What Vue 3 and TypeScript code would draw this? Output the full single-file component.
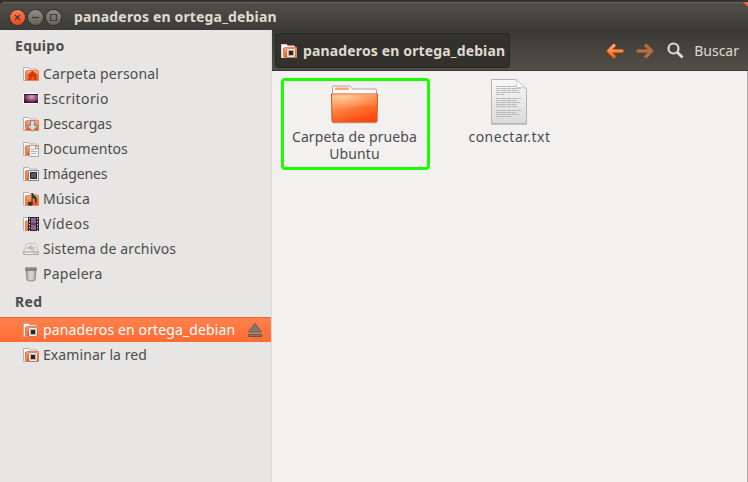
<script setup lang="ts">
interface Place {
  label: string
  icon: string
  spacing: number
  selected?: boolean
}

interface Section {
  title: string
  places: Place[]
}

const sections: Section[] = [
  {
    title: 'Equipo',
    places: [
      { label: 'Carpeta personal', icon: 'home', spacing: 0.19 },
      { label: 'Escritorio', icon: 'desktop', spacing: 0.4 },
      { label: 'Descargas', icon: 'download', spacing: 0.1 },
      { label: 'Documentos', icon: 'document', spacing: 0.1 },
      { label: 'Imágenes', icon: 'picture', spacing: -0.15 },
      { label: 'Música', icon: 'music', spacing: 0.1 },
      { label: 'Vídeos', icon: 'video', spacing: 0.5 },
      { label: 'Sistema de archivos', icon: 'drive', spacing: 0.15 },
      { label: 'Papelera', icon: 'trash', spacing: 0.25 },
    ],
  },
  {
    title: 'Red',
    places: [
      { label: 'panaderos en ortega_debian', icon: 'remote', spacing: 0.12, selected: true },
      { label: 'Examinar la red', icon: 'remote', spacing: 0.08 },
    ],
  },
]

const textLines: [number, number][] = [
  [8, 25], [10, 25], [12, 23], [14, 24], [16, 8], [20, 25], [22, 21], [24, 24], [26, 20], [28, 22], [32, 25], [34, 20], [36, 23], [38, 16],
]

const isFolder = (icon: string) => !['desktop', 'drive', 'trash'].includes(icon)
</script>

<template>
  <div class="window">
    <svg class="defs" width="0" height="0">
      <defs>
        <linearGradient id="orange" x1="0" y1="0" x2="0" y2="1">
          <stop offset="0" stop-color="#ffb184" /><stop offset="1" stop-color="#f04a12" />
        </linearGradient>
        <linearGradient id="folder" x1="0.1" y1="0" x2="0.6" y2="1">
          <stop offset="0" stop-color="#ffb57c" /><stop offset="0.5" stop-color="#ff7d40" /><stop offset="1" stop-color="#fc4a0b" />
        </linearGradient>
        <radialGradient id="gloss" cx="0.25" cy="0.1" r="0.8">
          <stop offset="0" stop-color="#ffdda8" stop-opacity="0.8" /><stop offset="1" stop-color="#ffa270" stop-opacity="0.25" />
        </radialGradient>
        <linearGradient id="paper" x1="0" y1="0" x2="0" y2="1">
          <stop offset="0" stop-color="#f8f8f8" /><stop offset="1" stop-color="#dadada" />
        </linearGradient>
        <radialGradient id="wallpaper" cx="0.55" cy="0.35" r="0.6">
          <stop offset="0" stop-color="#e3a9c5" /><stop offset="1" stop-color="#4e092b" />
        </radialGradient>
        <linearGradient id="arrow" x1="0" y1="0" x2="0" y2="1">
          <stop offset="0" stop-color="#ffb07c" /><stop offset="1" stop-color="#fb6420" />
        </linearGradient>
        <linearGradient id="steel" x1="0" y1="0" x2="1" y2="0">
          <stop offset="0" stop-color="#999" /><stop offset="0.5" stop-color="#e2e2e2" /><stop offset="1" stop-color="#999" />
        </linearGradient>
      </defs>
    </svg>

    <header class="titlebar">
      <div class="controls">
        <button class="control close" aria-label="Cerrar">
          <svg width="15" height="15" viewBox="0 0 15 15"><path d="M5 5l5 5M10 5l-5 5" /></svg>
        </button>
        <button class="control" aria-label="Minimizar">
          <svg width="15" height="15" viewBox="0 0 15 15"><path d="M4 7.5h7" /></svg>
        </button>
        <button class="control" aria-label="Maximizar">
          <svg width="15" height="15" viewBox="0 0 15 15"><path d="M4.5 4.5h6v6h-6z" /></svg>
        </button>
      </div>
      <h1 class="title">panaderos en ortega_debian</h1>
      <i class="corner left"></i><i class="corner right"></i>
    </header>

    <div class="body">
      <aside class="sidebar">
        <section v-for="section in sections" :key="section.title">
          <h2 class="heading"><span>{{ section.title }}</span></h2>
          <ul class="places">
            <li v-for="place in section.places" :key="place.label" class="place" :class="{ selected: place.selected }">
              <svg class="icon" width="16" height="16" viewBox="0 0 16 16">
                <template v-if="isFolder(place.icon)">
                  <path d="M.5 14.5V1.500h5l1.500 1.500h6.500v11.500z" fill="#faf9f8" stroke="#b5b1ad" />
                  <path d="M2 5h2v9H2z" fill="#f27a43" />
                  <path d="M3.500 4.500h12v10h-12z" fill="url(#orange)" stroke="#ef8255" />
                </template>
                <template v-if="place.icon === 'home'">
                  <path d="M9.500 4.800L15 9.500h-1.500V14h-2.700v-3H8.500v3H5.800V9.500H4z" fill="#d9360a" />
                </template>
                <template v-else-if="place.icon === 'desktop'">
                  <path d="M.5 2.500h15v10H.5z" fill="url(#wallpaper)" stroke="#fff" />
                  <path d="M1 3h14v1H1z" fill="#302227" />
                </template>
                <template v-else-if="place.icon === 'download'">
                  <path d="M7.500 4.500h4v5h3.500L9.500 15.300 4 9.500h3.500z" fill="#d9d9d9" stroke="#858585" />
                </template>
                <template v-else-if="place.icon === 'document'">
                  <path d="M6.500 4.500h6l3 3v8h-9z" fill="#f1f1f1" stroke="#aaa" />
                  <path d="M8 8.500h4M8 10.500h6M8 12.500h5" stroke="#b5b5b5" />
                  <path d="M12.500 4.500v3h3" fill="#fff" stroke="#999" />
                </template>
                <template v-else-if="place.icon === 'picture'">
                  <path d="M5.500 4.500h10v10h-10z" fill="#eee" stroke="#888" />
                  <path d="M7.500 6.500h6v6h-6z" fill="#674d70" stroke="#29232c" />
                </template>
                <template v-else-if="place.icon === 'music'">
                  <path d="M9 12.500V2c.5 2 4.500 3 4.500 6.500 0 1.500-.5 3-1 3.500.5-3-.5-5-3-5.500" fill="#333" stroke="#333" />
                  <ellipse cx="7.300" cy="12.800" rx="2.500" ry="2" fill="#333" />
                </template>
                <template v-else-if="place.icon === 'video'">
                  <path d="M5 1h11v14H5z" fill="#29242b" />
                  <path d="M8 2h5v5.500H8zM8 8.500h5V14H8z" fill="#965d95" />
                  <path d="M6.500 2v13M14.500 2v13" stroke="#ccc" stroke-dasharray="1.500 1.500" />
                </template>
                <template v-else-if="place.icon === 'drive'">
                  <path d="M3.500 2.500h9l3 8.500H.5z" fill="#e7e7e7" stroke="#c4c4c4" />
                  <path d="M.5 11h15v2.500H.5z" fill="#d4d4d4" stroke="#aaa" />
                  <path d="M3.500 7H12M5.500 7l2-2h2M7 7l2 2h2" fill="none" stroke="#aaa" />
                  <path d="M8 5.500L5.500 7 8 8.500z" fill="#aaa" />
                  <path d="M2 12.500h8" stroke="#f5f5f5" />
                </template>
                <template v-else-if="place.icon === 'trash'">
                  <path d="M3 3.500l1 10.700c2 1 6 1 8 0l1-10.700z" fill="url(#steel)" stroke="#8b8b8b" />
                  <path d="M5.500 6l.5 7M8 6v7M10.500 6l-.5 7" stroke="#c5c5c5" />
                  <rect x="2.500" y="1.500" width="11" height="3" rx="1.200" fill="#777" stroke="#888" />
                  <path d="M4 2h8" stroke="#bbb" />
                </template>
                <template v-else-if="place.icon === 'remote'">
                  <path d="M6 6h8v8H6z" fill="#b9b6b0" stroke="#6f665f" stroke-width=".6" />
                  <path d="M6.500 6.500h7v7h-7z" fill="none" stroke="#eee9e4" />
                  <path d="M8 8h4v4H8z" fill="#282828" />
                </template>
              </svg>
              <span class="label" :style="{ letterSpacing: place.spacing + 'px' }">{{ place.label }}</span>
              <svg v-if="place.selected" class="eject" width="16" height="16" viewBox="0 0 16 16">
                <path d="M8 1.500L14.500 10h-13zM1.500 12.500h13v2h-13z" fill="#807a74" stroke="#605d59" />
              </svg>
            </li>
          </ul>
        </section>
      </aside>

      <main class="main">
        <nav class="toolbar">
          <button class="crumb">
            <svg width="16" height="16" viewBox="0 0 16 16">
              <path d="M.5 14.500V1.500h5L7 3h6.500v11.500z" fill="#faf9f8" stroke="#d9d5d1" />
              <path d="M2 5h2v9H2z" fill="#f27a43" />
              <path d="M3.500 4.500h12v10h-12z" fill="url(#orange)" stroke="#ef8255" />
              <path d="M6 6h8v8H6z" fill="#b9b6b0" stroke="#6f665f" stroke-width=".6" />
              <path d="M6.500 6.500h7v7h-7z" fill="none" stroke="#eee9e4" />
              <path d="M8 8h4v4H8z" fill="#282828" />
            </svg>
            <span>panaderos en ortega_debian</span>
          </button>
          <div class="tools">
            <svg width="18" height="16" viewBox="0 0 18 16">
              <path d="M8 2.500L2.500 8 8 13.500M3 8h13" fill="none" stroke="#d94b10" stroke-width="3.800" stroke-linecap="round" stroke-linejoin="round" />
              <path d="M8 2.500L2.500 8 8 13.500M3 8h13" fill="none" stroke="url(#arrow)" stroke-width="2.600" stroke-linecap="round" stroke-linejoin="round" />
            </svg>
            <svg class="forward" width="18" height="16" viewBox="0 0 18 16">
              <path d="M10 2.500l5.500 5.500-5.500 5.500M15 8H2" fill="none" stroke="#a4542f" stroke-width="3.800" stroke-linecap="round" stroke-linejoin="round" />
              <path d="M10 2.500l5.500 5.500-5.500 5.500M15 8H2" fill="none" stroke="#b0714a" stroke-width="2.500" stroke-linecap="round" stroke-linejoin="round" />
            </svg>
            <svg class="search" width="17" height="17" viewBox="0 0 17 17">
              <circle cx="6.500" cy="6.500" r="5" fill="none" stroke="#dfdbd2" stroke-width="2.200" />
              <path d="M10.500 10.500l5 5" stroke="#dfdbd2" stroke-width="2.800" />
            </svg>
            <span class="search-label">Buscar</span>
          </div>
        </nav>

        <div class="files">
          <figure class="file highlighted">
            <svg width="50" height="42" viewBox="0 0 50 42">
              <rect x="2" y="38" width="45" height="2" rx="1" fill="#cbc4c0" />
              <path d="M2.500 30V3.500q0-1 1-1H19q1.500 0 2.500 1.500l1 1.500H45q1.500 0 1.500 1V30z" fill="#f9f9f9" stroke="#aaa6a3" />
              <rect x="5" y="4" width="14" height="2.500" rx="1" fill="#ffa26f" />
              <path d="M1.500 10.500h46l-.5 27q0 1-1 1H3q-1 0-1-1z" fill="url(#folder)" stroke="#d94e17" />
              <path d="M2 11h45l-.2 10Q27 22 2.300 27z" fill="url(#gloss)" />
              <path d="M2.500 11.500h44" stroke="#ffb184" />
            </svg>
            <figcaption>Carpeta de prueba Ubuntu</figcaption>
          </figure>
          <figure class="file document">
            <svg width="38" height="48" viewBox="0 0 38 48">
              <path d="M1 46.500h36" stroke="#c7c7c7" />
              <path d="M1.500 1.500H26L36.500 11v34.500h-35z" fill="url(#paper)" stroke="#b4b4b4" />
              <path v-for="[y, w] in textLines" :key="y" :d="`M6 ${y + 0.5}h${w}`" stroke="#b9b9b9" stroke-dasharray="4 .5 6 .5" />
              <path d="M25.500 1.200q2 3 1 8.300 6-1 10 1.500z" fill="#fff" stroke="#c5c5c5" stroke-width=".8" />
            </svg>
            <figcaption>conectar.txt</figcaption>
          </figure>
        </div>
      </main>
    </div>
  </div>
</template>

<style>
body {
  margin: 0;
}
</style>

<style scoped>
.window {
  display: flex;
  flex-direction: column;
  width: 748px;
  height: 482px;
  overflow: hidden;
  color: #4c4c4c;
  background: #f2f1f0;
  font: 14px/17px "Noto Sans", sans-serif;
}
.defs { position: absolute; }
button { font: inherit; margin: 0; }
h1, h2, ul, figure { margin: 0; padding: 0; }

.titlebar {
  position: relative;
  display: flex;
  flex: none;
  align-items: center;
  box-sizing: border-box;
  height: 30px;
  padding: 2px 10px 0;
  border-top: 2px solid #35342f;
  background: linear-gradient(#65635b 0 1px, #504f49 1px, #3c3b37);
}
.controls { display: flex; gap: 3px; }
.control {
  display: flex;
  width: 15px;
  height: 15px;
  padding: 0;
  border: 0;
  border-radius: 50%;
  background: linear-gradient(#8e8c83, #65635d);
  box-shadow: 0 0 0 1px #35342f;
}
.control path { fill: none; stroke: #3c3b37; stroke-width: 1.2; }
.close { background: linear-gradient(#ff7d51, #ed481a); }
.title {
  margin: -2px 0 0 13px;
  color: #dfdbd2;
  font-size: 14px;
  font-weight: 700;
  letter-spacing: 0.16px;
  line-height: 17px;
  white-space: nowrap;
}
.corner { position: absolute; top: 0; width: 3px; height: 2px; }
.left { left: 0; background: #650d2a; clip-path: polygon(0 0, 100% 0, 0 100%); }
.right { right: 0; width: 5px; height: 5px; background: #ef633b; clip-path: polygon(0 0, 100% 0, 100% 100%); }

.body { display: flex; flex: 1; min-height: 0; }
.sidebar {
  box-sizing: border-box;
  width: 272px;
  background: #e7e6e4;
  border-right: 1px solid #dcdad7;
}
.heading {
  display: flex;
  align-items: center;
  height: 31px;
  padding-left: 15px;
  font-size: 14px;
  letter-spacing: 0.35px;
}
.places { list-style: none; }
.place { display: flex; align-items: center; height: 25px; padding: 0 8px 0 23px; white-space: nowrap; }
.icon { flex: none; margin-right: 4px; }
.eject { margin-left: auto; }
.selected {
  color: #fff;
  background: linear-gradient(#f0662f 0 1px, #ff814d 1px, #ff6c34);
}

.main {
  display: flex;
  flex: 1;
  flex-direction: column;
  box-sizing: border-box;
  border-right: 1px solid #aaa9a7;
}
.toolbar {
  display: flex;
  align-items: center;
  justify-content: space-between;
  box-sizing: border-box;
  height: 41px;
  margin-right: -1px;
  padding: 1px 9px 0 3px;
  border-bottom: 1px solid #3a3833;
  background: linear-gradient(#3a3934, #514f47);
}
.crumb {
  display: flex;
  align-items: center;
  gap: 6px;
  box-sizing: border-box;
  width: 235px;
  height: 35px;
  padding: 1px 3px 1px 5px;
  border: 1px solid #282823;
  border-radius: 3px;
  background: #32312c;
  color: #dfdbd2;
  font-weight: 700;
  letter-spacing: 0.14px;
  white-space: nowrap;
}
.crumb svg { flex: none; }
.tools { display: flex; align-items: center; color: #dfdbd2; }
.forward { margin-left: 12px; }
.search { margin-left: 13px; }
.search-label { margin-left: 10px; }

.files { display: flex; gap: 5px; padding: 7px 9px; }
.file {
  display: flex;
  flex-direction: column;
  align-items: center;
  box-sizing: border-box;
  width: 149px;
  height: 92px;
  padding-right: 2px;
  border: 3px solid transparent;
  border-radius: 4px;
  text-align: center;
}
.file svg { flex: none; height: 47px; }
.file figcaption { letter-spacing: 0.12px; }
.highlighted { border-color: #1aff00; }
.document { padding-right: 0; }
.file.document svg { height: 48px; margin: -3px 2px 2px 0; }
.document figcaption { letter-spacing: 0.5px; }
</style>
